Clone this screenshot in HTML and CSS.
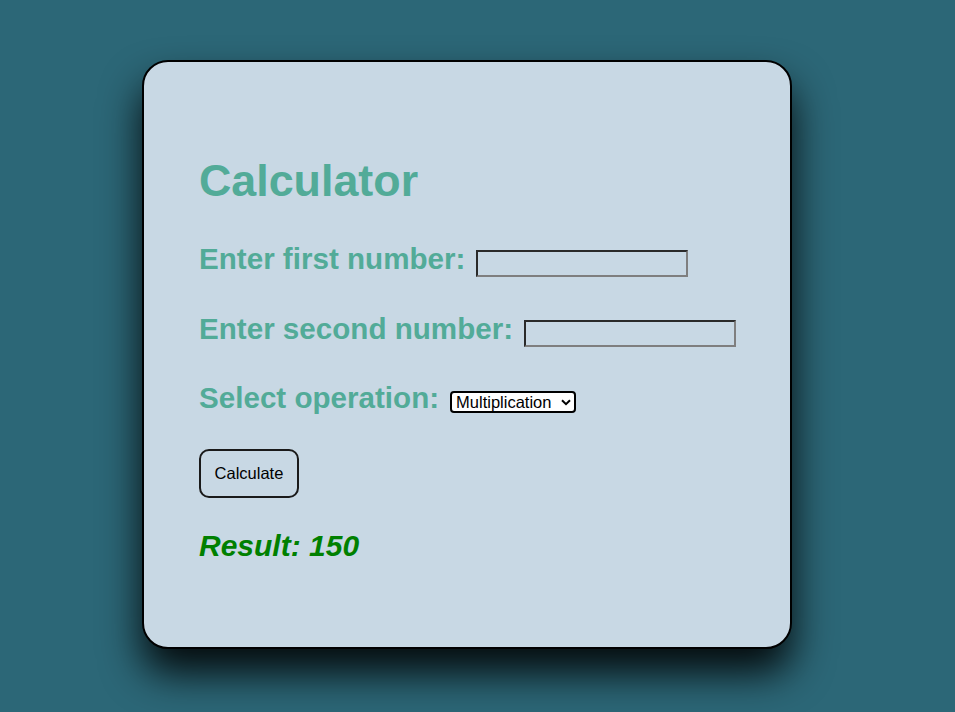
FILE: index.html
```html
<!DOCTYPE html>
<html lang="en">
<head>
<meta charset="utf-8">
<title>Calculator</title>
<link rel="stylesheet" href="styles.css">
</head>
<body>
<div class="card">
  <h1 class="title">Calculator</h1>
  <div class="row">
    <label class="label" for="n1">Enter first number:</label>
    <input class="num" id="n1" type="text">
  </div>
  <div class="row">
    <label class="label" for="n2">Enter second number:</label>
    <input class="num" id="n2" type="text">
  </div>
  <div class="row">
    <label class="label" for="op">Select operation:</label>
    <span class="select-wrap">
      <select class="op" id="op">
        <option>Addition</option>
        <option>Subtraction</option>
        <option selected>Multiplication</option>
        <option>Division</option>
      </select>
      <svg class="chev" width="10" height="7" viewBox="0 0 10 7" aria-hidden="true"><path d="M1 1.2 L5 5.2 L9 1.2" fill="none" stroke="#000" stroke-width="2"/></svg>
    </span>
  </div>
  <button class="calc" type="button">Calculate</button>
  <p class="result">Result: 150</p>
</div>
</body>
</html>
```

FILE: styles.css
```css
html, body {
  margin: 0;
  padding: 0;
}
body {
  background: #2c6777;
  font-family: "Liberation Sans", Arial, sans-serif;
  padding: 60px 0 0 142px;
  height: 712px;
  box-sizing: border-box;
  overflow: hidden;
}
.card {
  width: 650px;
  height: 589px;
  box-sizing: border-box;
  background: #c8d8e4;
  border: 2px solid #000;
  border-radius: 26px;
  box-shadow: 0 24px 40px rgba(0, 0, 0, 0.9);
  padding: 92px 52px 0 55px;
  display: flex;
  flex-direction: column;
  align-items: flex-start;
}
.title {
  margin: 0;
  font-size: 44.8px;
  line-height: 52px;
  font-weight: bold;
  color: #52ab98;
}
.row {
  display: flex;
  align-items: flex-start;
  gap: 11px;
  height: 34px;
}
.title + .row {
  margin-top: 36px;
}
.row + .row {
  margin-top: 35.5px;
}
.label {
  font-size: 29.6px;
  line-height: 34px;
  font-weight: bold;
  color: #52ab98;
}
.num {
  margin: 8px 0 0 0;
  width: 212px;
  height: 27px;
  box-sizing: border-box;
  background: transparent;
  border-style: solid;
  border-width: 2px;
  border-color: #2a2a2a #7f7f7f #7f7f7f #2a2a2a;
  padding: 1px 2px;
  font-size: 16px;
}
.select-wrap {
  position: relative;
  margin: 10px 0 0 0;
  display: block;
  height: 22px;
}
.op {
  display: block;
  -webkit-appearance: none;
  appearance: none;
  width: 126px;
  height: 22px;
  box-sizing: border-box;
  background: #fff;
  border: 2px solid #000;
  border-radius: 4px;
  font-family: "Liberation Sans", Arial, sans-serif;
  font-size: 16.5px;
  line-height: 18px;
  color: #000;
  padding: 0 0 0 4px;
  margin: 0;
}
.chev {
  position: absolute;
  right: 5px;
  top: 8px;
  pointer-events: none;
}
.calc {
  margin-top: 34px;
  width: 100px;
  height: 49px;
  background: transparent;
  border: 2px solid #1a1a1a;
  border-radius: 10px;
  font-family: "Liberation Sans", Arial, sans-serif;
  font-size: 16.5px;
  color: #000;
  padding: 0;
}
.result {
  margin: 30px 0 0 0;
  font-size: 30px;
  line-height: 35px;
  font-weight: bold;
  font-style: italic;
  color: #008000;
}
```
